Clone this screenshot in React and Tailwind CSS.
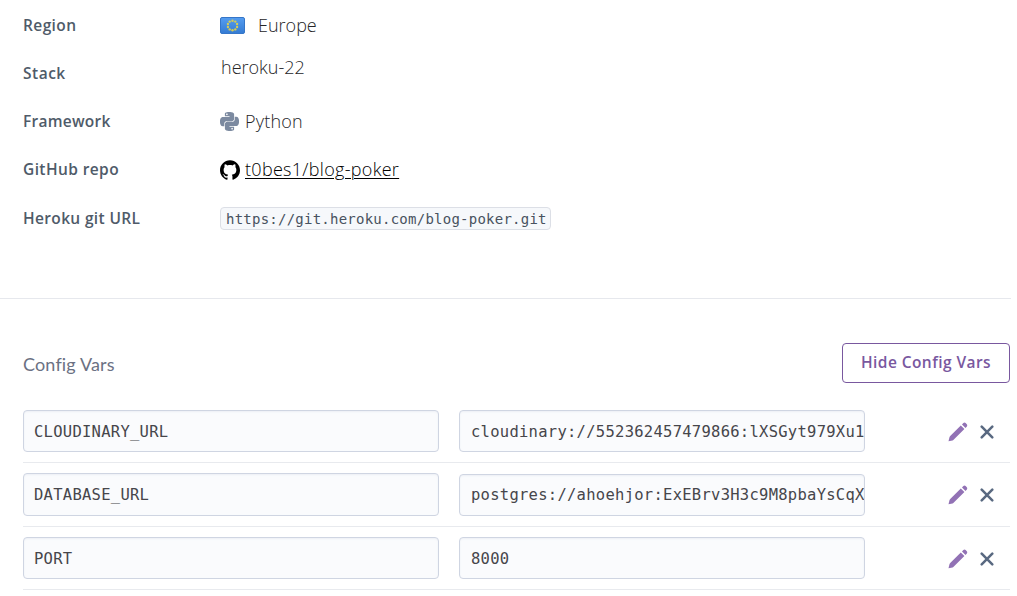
import { SiGithub, SiPython } from "react-icons/si";

const vars = [
  ["CLOUDINARY_URL", "cloudinary://552362457479866:lXSGyt979Xu1", "h-[53px]", "h-[42px] pt-[3px]", "pt-[3px]", "pt-px"],
  ["DATABASE_URL", "postgres://ahoehjor:ExEBrv3H3c9M8pbaYsCqX", "h-16", "h-[43px] pt-[3px]", "pt-px", "pb-px"],
  ["PORT", "8000", "h-[63px]", "h-[42px] pt-[3px]", "pt-[3px]", "pt-px"],
];

const stars = Array.from({ length: 10 }, (_, i) => {
  const a = (i * Math.PI) / 5;
  return [12.5 + 4.8 * Math.sin(a), 8.5 - 4.8 * Math.cos(a)];
});

function Flag() {
  return (
    <svg width="25" height="17" viewBox="0 0 25 17">
      <defs>
        <linearGradient id="flag" x1="0" y1="0" x2="0" y2="1">
          <stop offset="0" stopColor="#559df0" />
          <stop offset="1" stopColor="#347bd3" />
        </linearGradient>
      </defs>
      <rect x="0.5" y="0.5" width="24" height="16" rx="1.5" fill="url(#flag)" stroke="#3576c8" />
      {stars.map(([x, y], i) => (
        <circle key={i} cx={x} cy={y} r="1.2" fill="#d3cb58" />
      ))}
    </svg>
  );
}

function Pencil() {
  return (
    <svg width="20" height="20" viewBox="0 0 20 20" fill="#9272b5">
      <path d="M0.5 19.3 1.4 15.4Q1.6 14.7 2.2 14.1L12.8 3.5 16.4 7.1 5.6 17.7Q5 18.3 4.5 18.4Z" />
      <path d="M14 2.4 15.4 1.1Q16.5.1 17.6 1.1L18.8 2.3Q19.8 3.4 18.8 4.5L17.5 5.9Z" />
    </svg>
  );
}

function Cross() {
  return (
    <svg width="14" height="14" viewBox="0 0 14 14" stroke="#596981" strokeWidth="2.5" strokeLinecap="round">
      <path d="M1.7 1.7 12.3 12.3M12.3 1.7 1.7 12.3" />
    </svg>
  );
}

function Row({ label, labelClass, children }) {
  return (
    <div className="flex h-12 items-center">
      <div className="w-[197px] shrink-0 pt-px text-[15.5px] font-semibold text-[#4f5b69]">
        <span className={labelClass}>{label}</span>
      </div>
      {children}
    </div>
  );
}

export default function App() {
  return (
    <main className="h-[596px] w-[1017px] overflow-hidden bg-white font-['Open_Sans',sans-serif] whitespace-nowrap">
      <section className="h-[299px] w-[1011px] border-b border-[#e6e8ed] pt-px pl-[23px] text-[18px] text-[#252528]">
        <Row label="Region" labelClass="tracking-[0.4px]">
          <Flag />
          <span className="ml-[13px] font-light">Europe</span>
        </Row>
        <Row label="Stack" labelClass="tracking-[0.5px]">
          <span className="mb-[11px] ml-px font-light">heroku-22</span>
        </Row>
        <Row label="Framework" labelClass="tracking-[0.25px]">
          <SiPython size={19} color="#7c8aa0" />
          <span className="ml-1.5 font-light tracking-[0.2px]">Python</span>
        </Row>
        <Row label="GitHub repo" labelClass="tracking-[0.4px]">
          <SiGithub size={20} color="#000" className="mt-px" />
          <a className="ml-[5px] font-light tracking-[0.3px] text-black underline decoration-1 underline-offset-2">t0bes1/blog-poker</a>
        </Row>
        <Row label="Heroku git URL" labelClass="relative top-px tracking-[0.35px]">
          <code className="mt-[3px] flex h-[23px] w-[331px] items-center rounded border border-[#dcdfe6] bg-[#f6f8fb] pt-px pl-[5px] font-['DejaVu_Sans_Mono',monospace] text-[14px] tracking-[0.24px] text-[#485260]">
            https://git.heroku.com/blog-poker.git
          </code>
        </Row>
      </section>
      <section className="w-[1010px] pl-[23px]">
        <div className="flex h-[111px] items-center justify-between pt-[17px]">
          <h2 className="pt-[3px] font-['Lato',sans-serif] text-[18px] tracking-[0.15px] text-[#6b7183]">Config Vars</h2>
          <button className="mb-[1px] flex h-10 w-[168px] items-center justify-center rounded border border-[#79589f] text-[15.5px] font-semibold tracking-[0.43px] text-[#79589f]">
            Hide Config Vars
          </button>
        </div>
        {vars.map(([name, value, height, box, valuePad, iconPad]) => (
          <div key={name} className={`flex items-end border-b border-[#e8eaee] pb-2.5 ${height}`}>
            <div className={`flex w-[416px] items-center overflow-hidden rounded border border-[#cfd5e2] bg-[#fafbfd] pl-2.5 font-['DejaVu_Sans_Mono',monospace] text-[15.5px] tracking-[0.27px] text-[#46464b] shadow-[inset_0_1px_2px_#eceff5] ${box}`}>
              {name}
            </div>
            <div className={`ml-5 flex h-[42px] w-[406px] items-center overflow-hidden rounded border border-[#cfd5e2] bg-[#fafbfd] pl-[11px] font-['DejaVu_Sans_Mono',monospace] text-[15.5px] tracking-[0.27px] text-[#46464b] shadow-[inset_0_1px_2px_#eceff5] ${valuePad}`}>
              {value}
            </div>
            <div className={`ml-[83px] flex h-[42px] items-center gap-3 ${iconPad}`}>
              <Pencil />
              <Cross />
            </div>
          </div>
        ))}
      </section>
    </main>
  );
}
